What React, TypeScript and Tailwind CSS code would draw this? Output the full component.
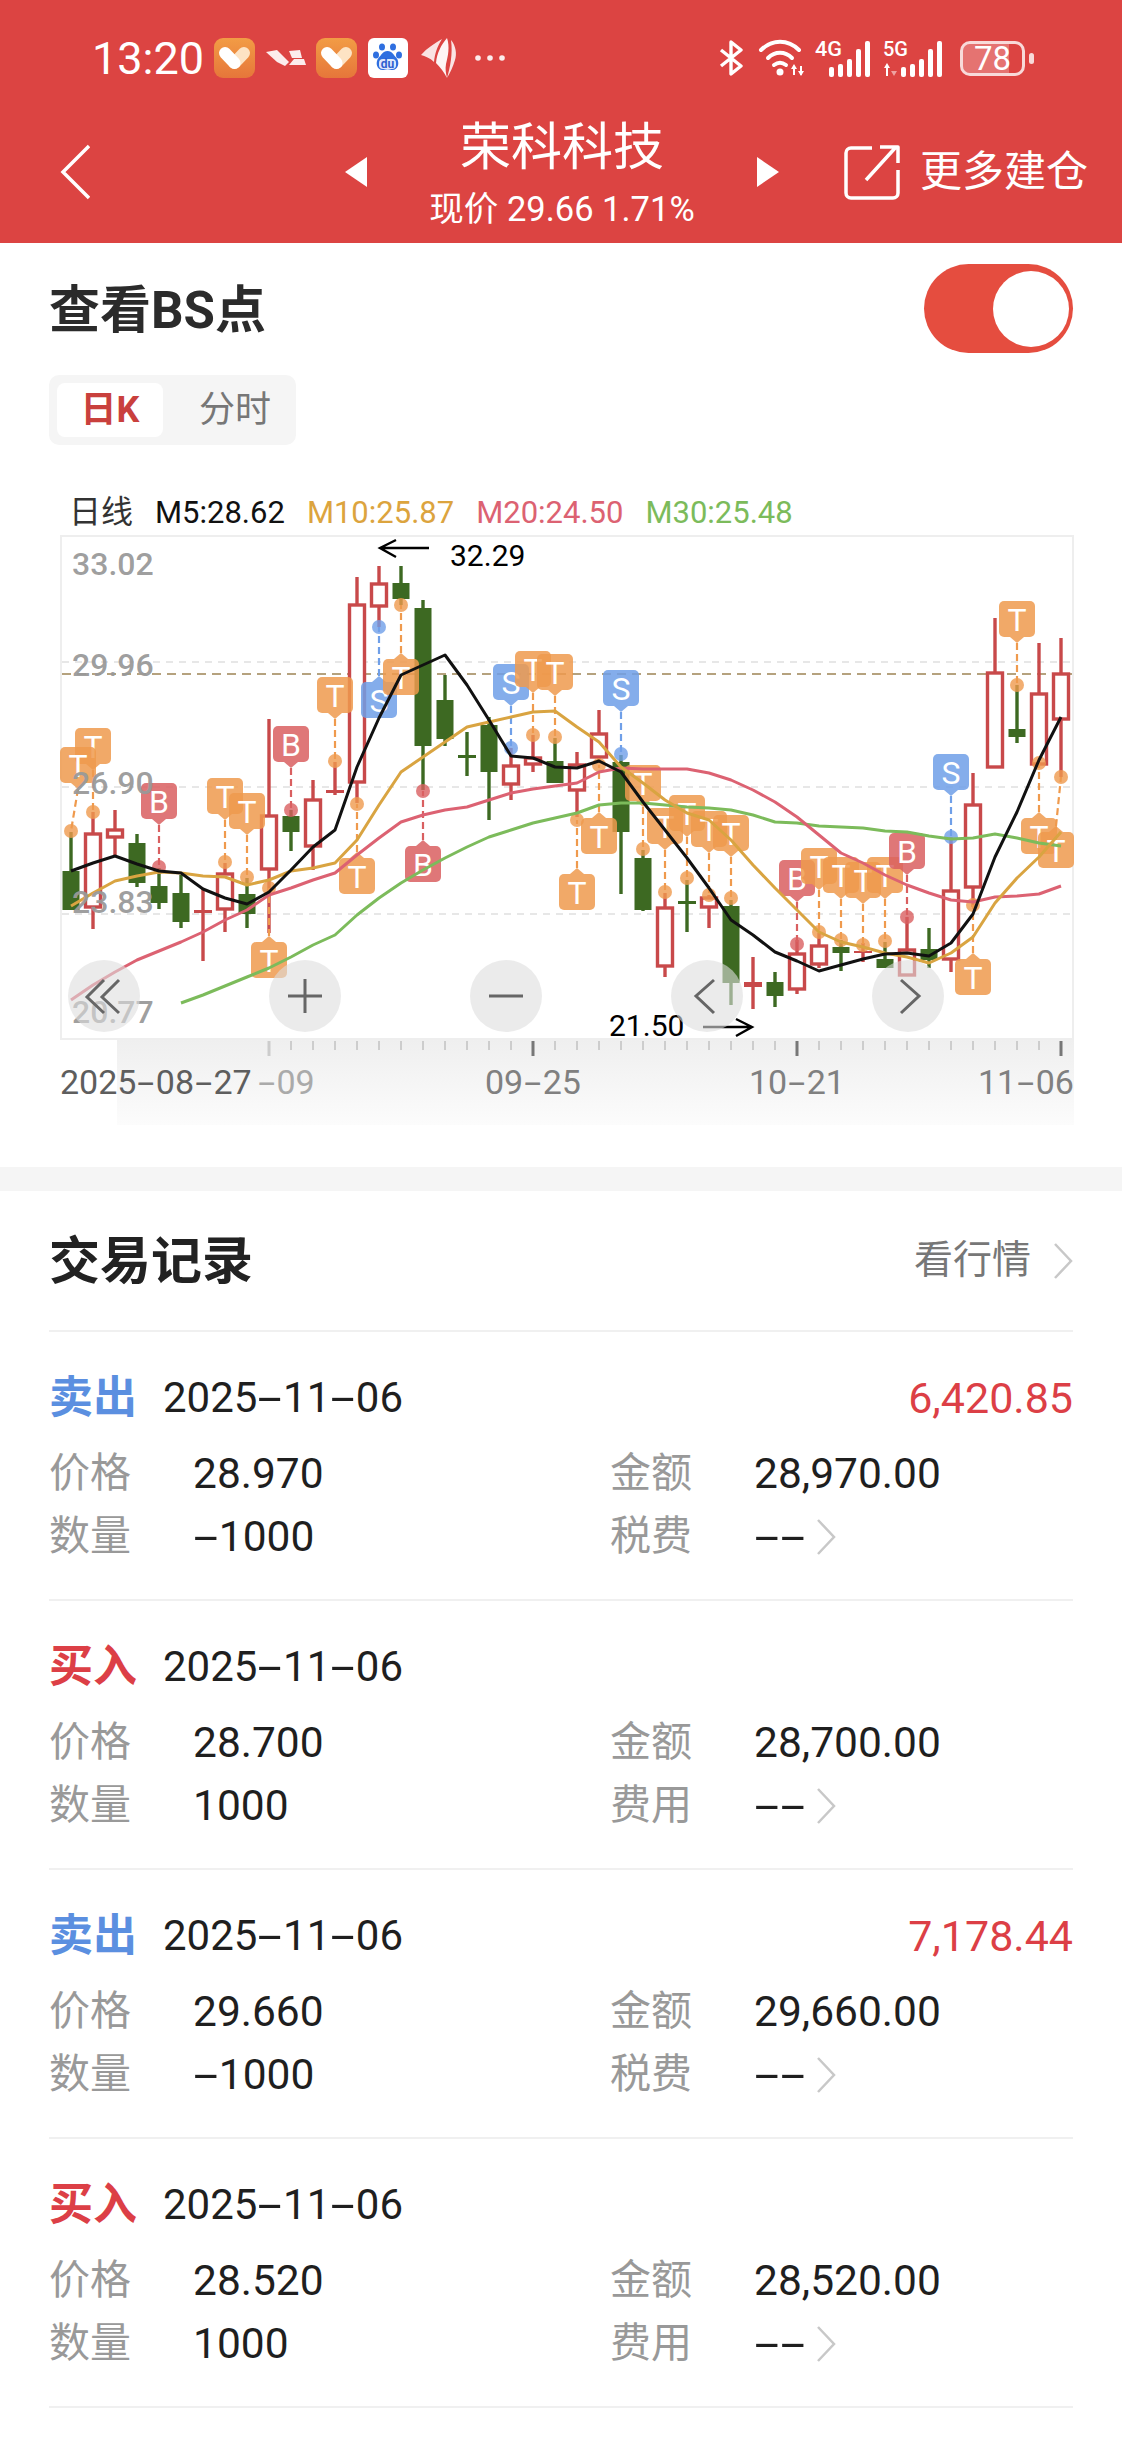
import React from 'react';

const xAt = (i: number) => 71 + 22 * i;

// [index, high, bodyTop, bodyBottom, low, up]
const candles: [number, number, number, number, number, boolean][] = [
  [0, 832, 871, 910, 910, false], [1, 812, 833, 908, 929, true], [2, 810, 829, 838, 855, true],
  [3, 834, 843, 883, 887, false], [4, 868, 886, 903, 909, false], [5, 875, 893, 922, 928, false],
  [6, 888, 910, 913, 961, true], [7, 863, 873, 910, 932, true], [8, 878, 894, 914, 928, false],
  [9, 719, 815, 870, 933, true], [10, 810, 816, 832, 851, false], [11, 780, 799, 847, 870, true],
  [12, 762, 790, 793, 795, true], [13, 577, 604, 783, 803, true], [14, 566, 583, 607, 627, true],
  [15, 566, 583, 599, 605, false], [16, 600, 608, 746, 790, false], [17, 675, 700, 739, 746, false],
  [18, 732, 755, 758, 776, false], [19, 717, 725, 772, 820, false], [20, 748, 765, 785, 800, true],
  [21, 735, 757, 765, 772, true], [22, 738, 761, 783, 783, false], [23, 752, 764, 791, 817, true],
  [24, 710, 733, 758, 763, true], [25, 755, 762, 832, 894, false], [26, 850, 858, 910, 911, false],
  [27, 893, 907, 967, 977, true], [28, 880, 901, 904, 932, false], [29, 895, 897, 908, 928, true],
  [30, 900, 906, 983, 1005, false], [31, 957, 982, 987, 1009, true], [32, 972, 982, 996, 1007, false],
  [33, 940, 953, 990, 994, true], [34, 933, 945, 965, 968, true], [35, 940, 947, 953, 971, false],
  [36, 943, 951, 953, 962, true], [37, 942, 959, 968, 968, false], [38, 917, 949, 976, 976, true],
  [39, 928, 949, 960, 968, false], [40, 837, 890, 960, 972, true], [41, 773, 804, 888, 907, true],
  [42, 618, 672, 768, 768, true], [43, 685, 729, 737, 743, false], [44, 643, 693, 765, 765, true],
  [45, 638, 673, 720, 777, true],
];

const m5 = [871, 863, 856, 864, 871, 873, 889, 898, 904, 892, 870, 847, 830, 767, 718, 675, 665, 655, 685, 720, 756, 758, 767, 768, 761, 772, 802, 830, 858, 888, 920, 935, 952, 961, 971, 965, 959, 954, 953, 956, 943, 914, 857, 812, 760, 717];
const m10 = [906, 893, 881, 876, 872, 873, 876, 877, 885, 880, 871, 868, 863, 840, 805, 772, 757, 742, 727, 722, 717, 712, 711, 727, 742, 767, 783, 800, 813, 820, 840, 865, 888, 910, 932, 942, 947, 953, 957, 963, 953, 937, 903, 878, 857, 832];
const m20 = [1000, 985, 972, 960, 951, 942, 932, 920, 910, 895, 888, 880, 873, 855, 838, 822, 815, 810, 807, 800, 793, 789, 786, 783, 772, 768, 769, 769, 769, 773, 780, 790, 802, 817, 835, 853, 863, 875, 885, 893, 900, 902, 897, 896, 894, 886];
const m30 = [1003, 995, 986, 977, 968, 957, 945, 935, 915, 898, 883, 870, 858, 847, 837, 830, 823, 818, 813, 805, 803, 803, 805, 807, 808, 810, 815, 822, 823, 826, 827, 828, 831, 832, 836, 839, 838, 834, 838, 843, 846];

// kind, candle index, box top, 'a' box above its dot / 'b' below, dot y, box centre override
const marks: [string, number, number, 'a' | 'b', number, number?][] = [
  ['T', 1, 728, 'a', 812], ['T', 0, 747, 'a', 831, 78], ['B', 4, 783, 'a', 867],
  ['T', 7, 778, 'a', 862], ['T', 8, 793, 'a', 877], ['B', 10, 726, 'a', 810],
  ['T', 12, 677, 'a', 761], ['S', 14, 682, 'b', 627], ['T', 15, 659, 'b', 605],
  ['T', 9, 942, 'b', 888], ['T', 13, 858, 'b', 804], ['B', 16, 846, 'b', 791],
  ['S', 20, 664, 'a', 748], ['T', 21, 651, 'a', 735], ['T', 22, 654, 'a', 737],
  ['T', 23, 874, 'b', 820], ['T', 24, 818, 'b', 765], ['S', 25, 670, 'a', 754],
  ['T', 26, 765, 'a', 849], ['T', 27, 808, 'a', 892], ['T', 28, 795, 'a', 878],
  ['T', 29, 811, 'a', 895], ['T', 30, 815, 'a', 898], ['B', 33, 860, 'a', 944],
  ['T', 34, 848, 'a', 932], ['T', 35, 857, 'a', 940], ['T', 36, 862, 'a', 945],
  ['T', 37, 857, 'a', 941], ['B', 38, 833, 'a', 917], ['S', 40, 754, 'a', 837],
  ['T', 41, 959, 'b', 905], ['T', 43, 601, 'a', 685], ['T', 44, 818, 'b', 763],
  ['T', 45, 832, 'b', 777, 1056],
];

const markColors: Record<string, string> = { T: '#ef9a4d', B: '#d95f60', S: '#6f9fe8' };

const points = (ys: number[], from = 0) => ys.map((y, i) => `${xAt(i + from)},${y}`).join(' ');

// the app's number font has a wide hyphen, so it is stretched here
function Dashed({ text, dash }: { text: string; dash: string }) {
  const parts = text.split('-');
  return (
    <>
      {parts.map((p, i) => (
        <React.Fragment key={i}>
          {i > 0 && <span className={`inline-block ${dash}`}>-</span>}
          {p}
        </React.Fragment>
      ))}
    </>
  );
}

function Heart() {
  return (
    <svg width="41" height="40" viewBox="0 0 41 40" fill="none" strokeLinecap="round">
      <defs>
        <linearGradient id="hg" x1="0" y1="0" x2="0" y2="1">
          <stop offset="0" stopColor="#f29c45" />
          <stop offset="1" stopColor="#e6763a" />
        </linearGradient>
      </defs>
      <rect width="41" height="40" rx="9" fill="url(#hg)" />
      <path d="M30 15L20.5 25" stroke="#fde3c4" strokeWidth="12" />
      <path d="M11 15L20.5 25" stroke="#fff" strokeWidth="12" />
    </svg>
  );
}

function Baidu() {
  return (
    <svg width="40" height="40" viewBox="0 0 40 40">
      <rect width="40" height="40" rx="6" fill="#fff" />
      <g fill="#2f6fe0">
        <ellipse cx="14" cy="9" rx="3" ry="3.6" />
        <ellipse cx="25" cy="9" rx="3" ry="3.6" />
        <ellipse cx="8" cy="17" rx="3" ry="3.6" />
        <ellipse cx="31" cy="17" rx="3" ry="3.6" />
        <path d="M19.5 13c5 0 6 4 9 7 4 5 1 13-5 12-3-1-5-1-8 0-6 1-9-7-5-12 3-3 4-7 9-7z" />
      </g>
      <rect x="11" y="21" width="17" height="10" rx="4" fill="#dfe9fb" />
      <text x="19.5" y="30" textAnchor="middle" fontSize="12" fontWeight="700" fill="#2f5fd0">du</text>
    </svg>
  );
}

function Bars() {
  return (
    <>
      <rect width="5" height="10" y="28" rx="2" />
      <rect width="5" height="13" y="25" rx="2" transform="translate(9)" />
      <rect width="5" height="18" y="20" rx="2" transform="translate(18)" />
      <rect width="5" height="28" y="10" rx="2" transform="translate(27)" />
      <rect width="5" height="36" y="2" rx="2" transform="translate(36)" />
    </>
  );
}

function StatusBar() {
  return (
    <div className="flex h-[116px] items-center text-white">
      <span className="ml-[92px] w-[112px] whitespace-nowrap text-[45px] leading-none">13:20</span>
      <div className="ml-[10px]"><Heart /></div>
      <svg className="ml-[11px]" width="40" height="16" viewBox="0 0 40 16" fill="#fff" fillOpacity="0.9">
        <path d="M0 2L11 0l12 12-4 4-8-4z" />
        <path d="M23 1L34 0l2 8H26z" />
        <path d="M28 9H38l2 6H23z" />
      </svg>
      <div className="ml-[10px]"><Heart /></div>
      <div className="ml-[11px]"><Baidu /></div>
      <svg className="ml-[13px]" width="37" height="40" viewBox="0 0 37 40" fill="#fff">
        <path d="M0 17C6 10 14 5 21 1c-5 8-7 14-8 23C9 20 4 18 0 17z" fillOpacity="0.85" />
        <path d="M15 25c1-10 5-18 11-25 3 9 1 18-1 26-1 5 0 10 1 14-3-6-7-11-11-15z" fillOpacity="0.95" />
        <path d="M30 2c5 6 6 14 4 20-2 7-5 13-8 18 3-10 6-24 4-38z" fillOpacity="0.85" />
      </svg>
      <svg className="ml-[17px]" width="30" height="6" viewBox="0 0 30 6" fill="#fff" fillOpacity="0.9">
        <circle cx="3" cy="3" r="2.8" /><circle cx="15" cy="3" r="2.8" /><circle cx="27" cy="3" r="2.8" />
      </svg>
      <svg className="ml-[214px]" width="24" height="36" viewBox="0 0 24 36" fill="none" stroke="#fff" strokeWidth="3.4" strokeLinejoin="round">
        <path d="M2 10L22 26 12 34V2l10 8L2 26" />
      </svg>
      <svg className="ml-[15px]" width="46" height="38" viewBox="0 0 46 38" fill="none" stroke="#fff" strokeWidth="4" strokeLinecap="round">
        <path d="M3 11C14 0 30 0 41 11" />
        <path d="M10 19C17 12 27 12 34 19" />
        <path d="M16 26c4-3 8-3 12 0" />
        <circle cx="22" cy="33" r="3.5" fill="#fff" stroke="none" />
        <path d="M36 27v9M43 27v9" strokeWidth="2" strokeLinecap="butt" />
        <path d="M36 25l-3 5h6zM43 37l-3-5h6z" fill="#fff" stroke="none" />
      </svg>
      <svg className="ml-[11px] overflow-visible" width="56" height="38" viewBox="0 0 56 38" fill="#fff">
        <text x="0" y="17" fontSize="21" fontWeight="500" textLength="27" lengthAdjust="spacingAndGlyphs">4G</text>
        <g transform="translate(14)"><Bars /></g>
      </svg>
      <svg className="ml-[12px] overflow-visible" width="62" height="38" viewBox="0 0 62 38" fill="#fff">
        <text x="0" y="17" fontSize="21" fontWeight="500" textLength="25" lengthAdjust="spacingAndGlyphs">5G</text>
        <path d="M4 26v11" stroke="#fff" strokeWidth="2" />
        <path d="M4 24l-3 5h6z" />
        <path d="M11 37l-3-5h6z" fillOpacity="0.5" />
        <g transform="translate(18)"><Bars /></g>
      </svg>
      <div className="ml-[15px] flex items-center">
        <div className="relative flex h-[35px] w-[65px] items-center justify-center rounded-[10px] border-[3px] border-white/80">
          <div className="absolute inset-y-0 left-0 w-[78%] rounded-l-[7px] bg-white/25" />
          <span className="relative text-[33px] leading-none text-white">78</span>
        </div>
        <div className="ml-[4px] h-[11px] w-[5px] rounded-full bg-white/80" />
      </div>
    </div>
  );
}

function NavBar() {
  return (
    <div className="flex h-[112px] items-center text-white">
      <svg className="ml-[60px]" width="30" height="56" viewBox="0 0 30 56" fill="none" stroke="#fff" strokeWidth="3.5">
        <path d="M29 2L3 28l26 26" />
      </svg>
      <svg className="ml-[254px]" width="24" height="30" viewBox="0 0 24 30" fill="#fff">
        <path d="M23 0v30L1 15z" />
      </svg>
      <div className="flex w-[388px] flex-col items-center pt-[4px]">
        <span className="text-[51px] leading-[70px]">荣科科技</span>
        <span className="text-[34.5px] leading-[52px]">现价 29.66 1.71%</span>
      </div>
      <svg width="24" height="30" viewBox="0 0 24 30" fill="#fff">
        <path d="M1 0v30l22-15z" />
      </svg>
      <svg className="ml-[64px]" width="56" height="56" viewBox="0 0 56 56" fill="none" stroke="#fff" strokeWidth="3.5">
        <path d="M28 4H7a5 5 0 0 0-5 5v40a5 5 0 0 0 5 5h42a5 5 0 0 0 5-5V26" />
        <path d="M22 36L52 3M36 3h18v16" strokeLinejoin="round" />
      </svg>
      <span className="ml-[20px] whitespace-nowrap text-[42px] leading-none">更多建仓</span>
    </div>
  );
}

function ChartDrawing() {
  return (
    <svg className="absolute -left-[2px] -top-[2px] h-[505px] w-[1014px] overflow-visible" viewBox="60 535 1014 505">
      <g strokeDasharray="7 6" strokeWidth="1.5" stroke="#e0e0e0">
        <path d="M62 662H1072M62 787H1072M62 914H1072" />
      </g>
      <path d="M62 674H1072" stroke="#b5a27e" strokeWidth="2" strokeDasharray="9 6" />

      {candles.map(([i, high, top, bottom, low, up]) => {
        const x = xAt(i);
        const color = up ? '#c8494a' : '#3d6922';
        const flat = bottom - top < 6;
        return (
          <g key={i}>
            <path d={`M${x} ${high}V${low}`} stroke={color} strokeWidth="3.4" />
            {flat ? (
              <rect x={x - 9} y={top} width="18" height={bottom - top} fill={color} />
            ) : up ? (
              <rect x={x - 7.5} y={top + 1} width="15" height={bottom - top - 2} fill="#fff" stroke={color} strokeWidth="3.4" />
            ) : (
              <rect x={x - 8.5} y={top} width="17" height={bottom - top} fill={color} />
            )}
          </g>
        );
      })}

      {marks.map(([kind, i, top, dir, dot, center], n) => {
        const dotX = xAt(i);
        const cx = center ?? dotX;
        const color = markColors[kind];
        const tipY = dir === 'a' ? top + 42 : top - 6;
        const tri = dir === 'a'
          ? `M${cx - 7} ${top + 36}L${cx} ${tipY}L${cx + 7} ${top + 36}Z`
          : `M${cx - 7} ${top}L${cx} ${tipY}L${cx + 7} ${top}Z`;
        return (
          <g key={n}>
            <path d={`M${cx} ${tipY}L${dotX} ${dot}`} stroke={color} strokeWidth="2.2" strokeDasharray="7 4" />
            <circle cx={dotX} cy={dot} r="7" fill={color} fillOpacity="0.8" />
            <g fillOpacity="0.85" fill={color}>
              <path d={tri} />
              <rect x={cx - 18} y={top} width="36" height="36" rx="5" />
            </g>
            <text x={cx} y={top + 30} textAnchor="middle" fontSize="32" fill="#fff">{kind}</text>
          </g>
        );
      })}

      <g fill="none" strokeWidth="3" strokeLinejoin="round">
        <polyline points={points(m30, 5)} stroke="#7cbb5b" />
        <polyline points={points(m20)} stroke="#dc6272" />
        <polyline points={points(m10)} stroke="#d9a441" />
        <polyline points={points(m5)} stroke="#111111" />
      </g>

      <g fontSize="32" fontWeight="500" fill="#999999" fillOpacity="0.95">
        <text x="72" y="575">33.02</text>
        <text x="72" y="676">29.96</text>
        <text x="72" y="794">26.90</text>
        <text x="72" y="913">23.83</text>
        <text x="72" y="1023">20.77</text>
      </g>

      <g fill="none" stroke="#000" strokeWidth="2.4">
        <path d="M380 548H429M396 540l-16 8 16 9" />
        <path d="M703 1027H752M736 1019l16 8-16 9" />
      </g>
      <text x="450" y="566" fontSize="30" fill="#000">32.29</text>
      <text x="609" y="1036" fontSize="30" fill="#000">21.50</text>
    </svg>
  );
}

function RoundButton({ left, d }: { left: string; d: string }) {
  return (
    <div className={`absolute top-[423px] flex h-[72px] w-[72px] items-center justify-center rounded-full bg-[#dedede]/60 ${left}`}>
      <svg width="44" height="44" viewBox="-22 -22 44 44" fill="none" stroke="#666" strokeWidth="3">
        <path d={d} />
      </svg>
    </div>
  );
}

function AxisLabel({ className, text }: { className: string; text: string }) {
  return (
    <span className={`absolute top-[22px] whitespace-nowrap text-[34px] leading-[40px] ${className}`}>
      <Dashed text={text} dash="mx-[5px] scale-x-[1.8]" />
    </span>
  );
}

function Chart() {
  return (
    <div className="ml-[11px] w-[1014px]">
      <div className="relative h-[505px] border-2 border-[#eeeeee]">
        <ChartDrawing />
        <RoundButton left="left-[6px]" d="M0-16L-17 1 0 17M15-16L-2 1 15 17" />
        <RoundButton left="left-[207px]" d="M-17 0H17M0-17V17" />
        <RoundButton left="left-[408px]" d="M-17 0H17" />
        <RoundButton left="left-[609px]" d="M7-16L-11 0 7 17" />
        <RoundButton left="left-[810px]" d="M-7-16L11 0-7 17" />
      </div>
      <div className="relative h-[85px]">
        <div className="absolute inset-y-0 left-[57px] right-0 bg-gradient-to-b from-[#efefef] to-[#fcfcfc]" />
        <svg className="absolute left-0 top-0 h-[20px] w-[1014px]" viewBox="60 1040 1014 20">
          {Array.from({ length: 37 }, (_, n) => {
            const i = n + 9;
            const major = i === 9 || i === 21 || i === 33 || i === 45;
            return (
              <path
                key={i}
                d={`M${xAt(i)} 1041V${major ? 1056 : 1050}`}
                stroke={i === 9 ? '#cccccc' : major ? '#777777' : '#aaaaaa'}
                strokeWidth={major ? 3 : 1}
              />
            );
          })}
        </svg>
        <AxisLabel className="left-0 text-[#5e5e5e]" text="2025-08-27" />
        <AxisLabel className="left-[197px] text-[#aaaaaa]" text="-09" />
        <AxisLabel className="left-[425px] text-[#808080]" text="09-25" />
        <AxisLabel className="left-[689px] text-[#808080]" text="10-21" />
        <AxisLabel className="left-[918px] text-[#808080]" text="11-06" />
      </div>
    </div>
  );
}

const records = [
  { side: '卖出', amount: '6,420.85', price: '28.970', total: '28,970.00', qty: '-1000', fee: '税费' },
  { side: '买入', amount: '', price: '28.700', total: '28,700.00', qty: '1000', fee: '费用' },
  { side: '卖出', amount: '7,178.44', price: '29.660', total: '29,660.00', qty: '-1000', fee: '税费' },
  { side: '买入', amount: '', price: '28.520', total: '28,520.00', qty: '1000', fee: '费用' },
];

const numDash = 'mx-[7px] scale-x-[2.1]';

function Chevron({ className }: { className: string }) {
  return (
    <svg className={className} width="20" height="36" viewBox="0 0 20 36" fill="none" stroke="#c8c8c8" strokeWidth="2.5">
      <path d="M2 1l16 17L2 35" />
    </svg>
  );
}

function RecordRow({ r }: { r: (typeof records)[number] }) {
  const label = 'w-[144px] shrink-0 text-[41px] text-[#999999]';
  return (
    <div className="h-[269px] border-b-2 border-[#f0f0f0] pt-[41px]">
      <div className="flex h-[50px] items-center text-[42px] leading-none text-[#1f1f1f]">
        <span className={`w-[114px] shrink-0 text-[44px] font-bold ${r.side === '卖出' ? 'text-[#5b8fe0]' : 'text-[#dc3f46]'}`}>{r.side}</span>
        <span className="whitespace-nowrap"><Dashed text="2025-11-06" dash={numDash} /></span>
        <span className="ml-auto text-[43px] text-[#dc3f46]">{r.amount}</span>
      </div>
      <div className="mt-[19px] grid grid-cols-[561px_1fr] text-[42.5px] leading-[63px] text-[#1f1f1f]">
        <div className="flex"><span className={label}>价格</span>{r.price}</div>
        <div className="flex"><span className={label}>金额</span>{r.total}</div>
        <div className="flex"><span className={label}>数量</span><span><Dashed text={r.qty} dash={numDash} /></span></div>
        <div className="flex items-center">
          <span className={label}>{r.fee}</span>
          <span><Dashed text="--" dash={numDash} /></span>
          <Chevron className="ml-[10px]" />
        </div>
      </div>
    </div>
  );
}

export default function App() {
  return (
    <div className="h-[2442px] w-[1122px] overflow-hidden bg-white font-[Roboto,'Noto_Sans_CJK_SC',sans-serif]">
      <header className="h-[243px] bg-[#dc4442]">
        <StatusBar />
        <NavBar />
      </header>

      <section className="px-[49px] pb-[42px]">
        <div className="mt-[21px] flex h-[89px] items-center justify-between">
          <h1 className="pt-[3px] text-[51px] font-bold leading-none text-[#2b2b2b]">查看BS点</h1>
          <div className="flex h-[89px] w-[149px] items-center justify-end rounded-full bg-[#e54d3f] pr-[4px]">
            <div className="h-[76px] w-[76px] rounded-full bg-white" />
          </div>
        </div>
        <div className="mt-[22px] flex h-[70px] w-[247px] items-center rounded-[10px] bg-[#f5f5f5] pl-[8px]">
          <div className="flex h-[54px] w-[106px] items-center justify-center rounded-[8px] bg-white text-[36px] font-bold text-[#c9403d]">日K</div>
          <div className="ml-[36px] text-[36px] text-[#777777]">分时</div>
        </div>
        <div className="ml-[20px] mt-[47px] flex h-[40px] items-center gap-[22px] text-[31px] leading-none">
          <span className="text-[32px] text-[#333333]">日线</span>
          <span className="text-[#111111]">M5:28.62</span>
          <span className="text-[#dca43e]">M10:25.87</span>
          <span className="text-[#dc6272]">M20:24.50</span>
          <span className="text-[#7cbb5b]">M30:25.48</span>
        </div>
        <div className="mt-[3px]">
          <Chart />
        </div>
      </section>

      <div className="h-[24px] bg-[#f5f5f5]" />

      <section className="px-[49px]">
        <div className="flex h-[141px] items-center justify-between border-b-2 border-[#f0f0f0]">
          <h2 className="pt-[2px] text-[51px] font-bold leading-none text-[#222222]">交易记录</h2>
          <div className="flex items-center">
            <span className="text-[39px] leading-none text-[#777777]">看行情</span>
            <Chevron className="ml-[22px]" />
          </div>
        </div>
        {records.map((r, i) => (
          <RecordRow key={i} r={r} />
        ))}
      </section>
    </div>
  );
}
